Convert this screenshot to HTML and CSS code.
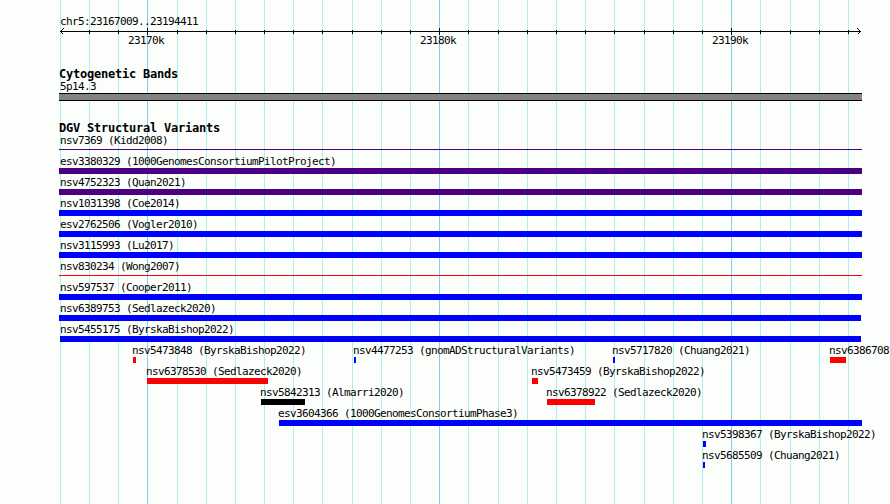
FILE: index.html
```
<!DOCTYPE html>
<html lang="en">
<head>
<meta charset="utf-8">
<title>chr5:23167009..23194411</title>
<link rel="stylesheet" href="styles.css">
</head>
<body>
<main class="browser">
<svg class="gridlines" width="890" height="504" shape-rendering="crispEdges" aria-hidden="true">
<path class="minor" d="M60.5 0V504M89.5 0V504M118.5 0V504M177.5 0V504M206.5 0V504M235.5 0V504M264.5 0V504M293.5 0V504M322.5 0V504M352.5 0V504M381.5 0V504M410.5 0V504M468.5 0V504M498.5 0V504M527.5 0V504M556.5 0V504M585.5 0V504M614.5 0V504M644.5 0V504M673.5 0V504M702.5 0V504M760.5 0V504M790.5 0V504M819.5 0V504M848.5 0V504"/>
<path class="major" d="M147.5 0V504M439.5 0V504M731.5 0V504"/>
</svg>
<header class="ruler">
<p class="label region">chr5:23167009..23194411</p>
<svg class="axis" width="890" height="9" shape-rendering="crispEdges" aria-hidden="true">
<path d="M60 4.500H861M89.500 3V7M118.500 3V7M177.500 3V7M206.500 3V7M235.500 3V7M264.500 3V7M293.500 3V7M322.500 3V7M352.500 3V7M381.500 3V7M410.500 3V7M468.500 3V7M498.500 3V7M527.500 3V7M556.500 3V7M585.500 3V7M614.500 3V7M644.500 3V7M673.500 3V7M702.500 3V7M760.500 3V7M790.500 3V7M819.500 3V7M848.500 3V7M147.500 1V8M439.500 1V8M731.500 1V8"/>
<path d="M63.500 1.500L60.500 4.500L63.500 7.500M857.500 1.500L860.500 4.500L857.500 7.500"/>
</svg>
<div class="row ticks">
<span class="label" style="--x:128px">23170k</span><span class="label" style="--x:420px">23180k</span><span class="label" style="--x:712px">23190k</span>
</div>
</header>
<section class="bands">
<h2>Cytogenetic Bands</h2>
<p class="label band-name">5p14.3</p>
<div class="band"></div>
</section>
<section class="variants">
<h2>DGV Structural Variants</h2>
<div class="row"><div class="feature line purple" style="--x:59px;--w:803px"><span class="label">nsv7369 (Kidd2008)</span></div></div>
<div class="row"><div class="feature purple" style="--x:59px;--w:803px"><span class="label">esv3380329 (1000GenomesConsortiumPilotProject)</span></div></div>
<div class="row"><div class="feature purple" style="--x:59px;--w:803px"><span class="label">nsv4752323 (Quan2021)</span></div></div>
<div class="row"><div class="feature blue" style="--x:59px;--w:803px"><span class="label">nsv1031398 (Coe2014)</span></div></div>
<div class="row"><div class="feature blue" style="--x:59px;--w:803px"><span class="label">esv2762506 (Vogler2010)</span></div></div>
<div class="row"><div class="feature blue" style="--x:59px;--w:803px"><span class="label">nsv3115993 (Lu2017)</span></div></div>
<div class="row"><div class="feature line red" style="--x:59px;--w:803px"><span class="label">nsv830234 (Wong2007)</span></div></div>
<div class="row"><div class="feature blue" style="--x:59px;--w:803px"><span class="label">nsv597537 (Cooper2011)</span></div></div>
<div class="row"><div class="feature blue" style="--x:59px;--w:802px"><span class="label">nsv6389753 (Sedlazeck2020)</span></div></div>
<div class="row"><div class="feature blue flush" style="--x:60px;--w:801px"><span class="label">nsv5455175 (ByrskaBishop2022)</span></div></div>
<div class="row">
<div class="feature red inset" style="--x:133px;--w:3px"><span class="label">nsv5473848 (ByrskaBishop2022)</span></div>
<div class="feature blue inset" style="--x:354px;--w:2px"><span class="label">nsv4477253 (gnomADStructuralVariants)</span></div>
<div class="feature blue inset" style="--x:613px;--w:2px"><span class="label">nsv5717820 (Chuang2021)</span></div>
<div class="feature red inset" style="--x:830px;--w:16px"><span class="label">nsv6386708</span></div>
</div>
<div class="row">
<div class="feature red inset" style="--x:147px;--w:121px"><span class="label">nsv6378530 (Sedlazeck2020)</span></div>
<div class="feature red inset" style="--x:532px;--w:6px"><span class="label">nsv5473459 (ByrskaBishop2022)</span></div>
</div>
<div class="row">
<div class="feature black inset" style="--x:261px;--w:44px"><span class="label">nsv5842313 (Almarri2020)</span></div>
<div class="feature red inset" style="--x:547px;--w:48px"><span class="label">nsv6378922 (Sedlazeck2020)</span></div>
</div>
<div class="row"><div class="feature blue inset" style="--x:279px;--w:583px"><span class="label">esv3604366 (1000GenomesConsortiumPhase3)</span></div></div>
<div class="row"><div class="feature blue inset" style="--x:703px;--w:3px"><span class="label">nsv5398367 (ByrskaBishop2022)</span></div></div>
<div class="row"><div class="feature blue inset" style="--x:703px;--w:2px"><span class="label">nsv5685509 (Chuang2021)</span></div></div>
</section>
</main>
</body>
</html>
```
FILE: styles.css
```
* { box-sizing: border-box; }
body { margin: 0; background: #fcfefc; color: #000; overflow: hidden; }
h2, p { margin: 0; }

.browser { position: relative; width: 890px; height: 504px; padding-top: 15px; overflow: hidden; }
.gridlines { position: absolute; inset: 0; z-index: -1; }
.gridlines path { fill: none; stroke-width: 1; }
.minor { stroke: #afeeee; }
.major { stroke: #87ceeb; }

.label {
  display: block;
  height: 12px;
  font: 11px/14px "DejaVu Sans Mono", monospace;
  letter-spacing: -0.622px;
  white-space: pre;
}
h2 {
  height: 12px;
  padding-left: 59px;
  font: bold 12px/12px "DejaVu Sans Mono", monospace;
  letter-spacing: -0.224px;
}

.region { padding-left: 60px; }
.axis { display: block; }
.axis path { fill: none; stroke: #000; }
.row { display: grid; grid-template-columns: 890px; }
.row > * { grid-area: 1 / 1; margin-left: var(--x); }
.ticks { height: 13px; margin-top: -2px; }

.bands { padding-top: 21px; }
.band-name { padding-left: 60px; }
.band { width: 803px; height: 8px; margin: 1px 0 0 59px; background: #848284; border: solid #000; border-width: 1px 0; }

.variants { padding-top: 21px; }
.variants .row { height: 21px; }
.feature { width: var(--w); }
.feature .label { margin-left: 1px; }
.feature.flush .label { margin-left: 0; }
.feature.inset .label { margin-left: -1px; }
.feature::after { content: ""; display: block; height: 6px; margin-top: 1px; background: var(--color); }
.feature.line::after { height: 1px; margin-top: 3px; }
.purple { --color: #4b0082; }
.blue { --color: #0000ff; }
.red { --color: #ff0000; }
.black { --color: #000; }
```
